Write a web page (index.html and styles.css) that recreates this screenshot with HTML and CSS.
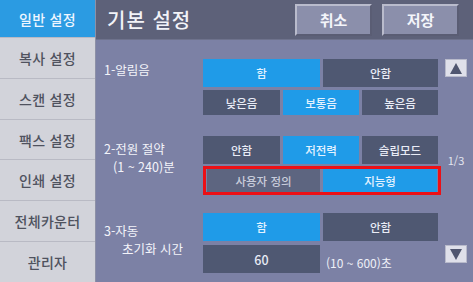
FILE: index.html
```html
<!DOCTYPE html>
<html lang="ko">
<head>
<meta charset="utf-8">
<link rel="stylesheet" href="styles.css">
</head>
<body>
<div class="screen">
  <nav class="sidebar">
    <div class="tab active">일반 설정</div>
    <div class="tab">복사 설정</div>
    <div class="tab">스캔 설정</div>
    <div class="tab">팩스 설정</div>
    <div class="tab">인쇄 설정</div>
    <div class="tab">전체카운터</div>
    <div class="tab">관리자</div>
  </nav>
  <main class="main">
    <header class="header">
      <h1 class="title">기본 설정</h1>
      <div class="actions">
        <button class="hbtn">취소</button>
        <button class="hbtn">저장</button>
      </div>
    </header>
    <div class="content">
      <div class="sections">
        <section class="section s1">
          <div class="label">1-알림음</div>
          <div class="controls">
            <div class="row two">
              <div class="btn on">함</div>
              <div class="btn">안함</div>
            </div>
            <div class="row three short">
              <div class="btn">낮은음</div>
              <div class="btn on">보통음</div>
              <div class="btn">높은음</div>
            </div>
          </div>
        </section>
        <section class="section s2">
          <div class="label">2-전원 절약<br><span class="indent">(1 ~ 240)분</span></div>
          <div class="controls">
            <div class="row three">
              <div class="btn">안함</div>
              <div class="btn on">저전력</div>
              <div class="btn">슬립모드</div>
            </div>
            <div class="highlight">
              <div class="btn muted">사용자 정의</div>
              <div class="btn on">지능형</div>
            </div>
          </div>
        </section>
        <section class="section s3">
          <div class="label">3-자동<br><span class="indent2">초기화 시간</span></div>
          <div class="controls">
            <div class="row two">
              <div class="btn on">함</div>
              <div class="btn">안함</div>
            </div>
            <div class="row two">
              <div class="btn value">60</div>
              <div class="range">(10 ~ 600)초</div>
            </div>
          </div>
        </section>
      </div>
      <div class="side">
        <div class="arrow"><span class="tri up"></span></div>
        <div class="page">1/3</div>
        <div class="arrow"><span class="tri down"></span></div>
      </div>
    </div>
  </main>
</div>
</body>
</html>
```
FILE: styles.css
```css
* { box-sizing: border-box; }
html, body { margin: 0; padding: 0; }
body {
  width: 473px;
  height: 282px;
  overflow: hidden;
  font-family: "Noto Sans CJK KR", "Noto Sans", sans-serif;
  background: #7b80a3;
}
.screen {
  display: grid;
  grid-template-columns: 96px 1fr;
  height: 282px;
}
.sidebar {
  display: flex;
  flex-direction: column;
  background: #d2d3da;
  border-right: 1px solid #8d90a6;
}
.tab {
  flex: 1;
  display: flex;
  align-items: center;
  justify-content: center;
  font-size: 14px;
  font-weight: 500;
  color: #4f525e;
  border-bottom: 1px solid #b9bac4;
  letter-spacing: 0.3px;
}
.tab:last-child { border-bottom: none; }
.tab.active {
  background: #2b9be2;
  color: #eef6ff;
  flex: 0 0 38px;
}
.main {
  display: flex;
  flex-direction: column;
  background: #7c81a5;
}
.header {
  height: 40px;
  background: #5d6179;
  display: flex;
  align-items: center;
  justify-content: space-between;
  padding: 0 14px 0 11px;
  border-bottom: 1px solid #6e728c;
}
.title {
  margin: 0;
  font-size: 20px;
  font-weight: 500;
  color: #f2f3f8;
  letter-spacing: 1px;
}
.actions { display: flex; gap: 10px; }
.hbtn {
  width: 77px;
  height: 32px;
  background: #8b8fab;
  border: 2px solid #b9bbcc;
  border-right-color: #5a5d74;
  border-bottom-color: #5a5d74;
  color: #f4f5fa;
  font-family: inherit;
  font-size: 15px;
  font-weight: 700;
  padding: 0;
}
.content {
  flex: 1;
  display: flex;
  padding-top: 19px;
}
.sections { width: 345px; display: flex; flex-direction: column; }
.section { display: flex; }
.s2 { margin-top: 21px; }
.s3 { margin-top: 18px; }
.label {
  width: 107px;
  padding-left: 8px;
  font-size: 12.5px;
  line-height: 18px;
  color: #f3f4fa;
}
.s1 .label { padding-top: 2px; }
.s2 .label { padding-top: 4px; }
.s3 .label { padding-top: 9px; }
.indent { padding-left: 9px; }
.indent2 { padding-left: 18px; }
.controls { width: 238px; display: flex; flex-direction: column; }
.row { display: grid; height: 28px; }
.row.two { grid-template-columns: 117px 115px; gap: 3px; }
.row.three { grid-template-columns: 77px 76px 76px; gap: 3px; }
.row.short { height: 25px; margin-top: 3px; }
.s3 .row + .row { margin-top: 4px; }
.btn {
  display: flex;
  align-items: center;
  justify-content: center;
  background: #4f5872;
  color: #e9ecf6;
  font-size: 11.5px;
  font-weight: 500;
}
.btn.on { background: #1f9be8; color: #e4f2ff; }
.btn.muted { background: #5d6580; color: #c8ccdb; }
.btn.value { font-size: 12.5px; }
.highlight {
  margin-top: 2px;
  height: 29px;
  border: 3px solid #ec1016;
  display: grid;
  grid-template-columns: 113px 1fr;
  gap: 3px;
  padding: 0 1px;
}
.range {
  display: flex;
  align-items: flex-end;
  padding: 0 0 2px 3px;
  font-size: 12px;
  color: #eef0f8;
}
.side {
  width: 22px;
  margin-left: 4px;
  display: flex;
  flex-direction: column;
  align-items: center;
}
.arrow {
  width: 22px;
  height: 18px;
  background: #dfe0ea;
  border: 1px solid #b8bacb;
  display: flex;
  align-items: center;
  justify-content: center;
}
.tri { width: 0; height: 0; border-left: 6px solid transparent; border-right: 6px solid transparent; }
.tri.up { border-bottom: 11px solid #505670; }
.tri.down { border-top: 11px solid #505670; }
.page {
  margin-top: 76px;
  margin-bottom: 78px;
  font-size: 11px;
  color: #e3e5ef;
  line-height: 14px;
}
```
